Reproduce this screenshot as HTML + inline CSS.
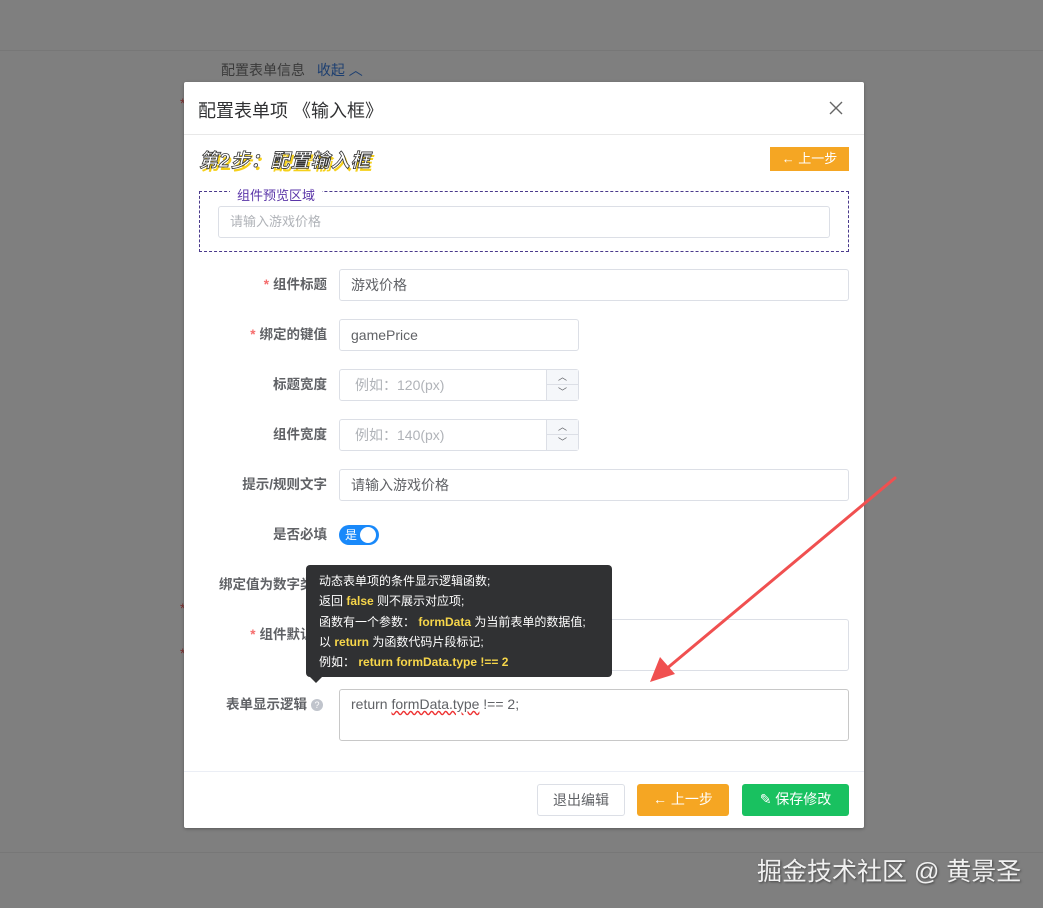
<!DOCTYPE html>
<html><head><meta charset="utf-8"><style>
*{box-sizing:border-box;margin:0;padding:0}
body{width:1043px;height:908px;position:relative;overflow:hidden;background:#7f7f7f;font-family:"Liberation Sans","Noto Sans CJK SC",sans-serif;font-size:14px;color:#606266}
.a{position:absolute}
.inp{position:absolute;border:1px solid #dcdfe6;border-radius:3px;background:#fff;height:32px;line-height:30px;padding-left:11px;color:#606266;font-size:14px}
.ph{color:#b0b3b8}
.lbl{position:absolute;right:716px;width:160px;text-align:right;font-weight:bold;color:#606266;font-size:13.5px;line-height:32px}
.star{color:#f56c6c;margin-right:4px}
.spin{position:absolute;right:0;top:0;width:32px;height:30px;border-left:1px solid #dcdfe6;background:#f5f7fa;font-size:9px;color:#606266;text-align:center}
.spin div{height:15px;line-height:15px}
.spin div:first-child{border-bottom:1px solid #dcdfe6}
.ta{position:absolute;border:1px solid #dcdfe6;border-radius:3px;background:#fff}
.btn{position:absolute;height:32px;line-height:30px;text-align:center;border-radius:3px;font-size:14px;color:#fff}
.tip b{color:#f7d64a}
</style></head><body>
<div class="a" style="left:0;top:50px;width:1043px;height:1px;background:#777"></div>
<div class="a" style="left:0;top:852px;width:1043px;height:1px;background:#777"></div>
<div class="a" style="left:221px;top:60px;font-size:14px;color:#3a3a3a">配置表单信息 <span style="color:#1d3f70;margin-left:8px">收起 ︿</span></div>
<div class="a" style="left:180px;top:95px;color:#7a3030">*</div>
<div class="a" style="left:180px;top:600px;color:#7a3030">*</div>
<div class="a" style="left:180px;top:645px;color:#7a3030">*</div>

<div class="a" style="left:184px;top:82px;width:680px;height:746px;background:#fff;border-radius:2px;box-shadow:0 1px 3px rgba(0,0,0,.3)">
<div class="a" style="left:14px;top:15px;font-size:18px;color:#303133">配置表单项 《输入框》</div>
<svg class="a" style="left:645px;top:19px" width="14" height="14"><path d="M1 1L13 13M13 1L1 13" stroke="#666" stroke-width="1.4"/></svg>
<div class="a" style="left:0;top:52px;width:680px;height:1px;background:#e8e8e8"></div>
<div class="a" style="left:15px;top:64px;font-size:19px;font-weight:bold;font-style:italic;color:#fff;-webkit-text-stroke:0.8px #333;text-shadow:2px 3px 0 #f5d01a;letter-spacing:1px">第2步：配置输入框</div>
<div class="btn" style="left:586px;top:65px;width:79px;height:24px;line-height:24px;background:#f5a623;font-size:13px;border-radius:0">← 上一步</div>
<div class="a" style="left:15px;top:109px;width:650px;height:61px;border:1px dashed #4a3a8c"></div>
<div class="a" style="left:46px;top:103px;background:#fff;padding:0 7px;color:#5a35a8;font-size:13px">组件预览区域</div>
<div class="inp ph" style="left:34px;top:124px;width:612px;height:32px;font-size:13px">请输入游戏价格</div>
</div>

<div class="lbl" style="top:269px"><span class="star">*</span>组件标题</div>
<div class="inp" style="left:339px;top:269px;width:510px">游戏价格</div>
<div class="lbl" style="top:319px"><span class="star">*</span>绑定的键值</div>
<div class="inp" style="left:339px;top:319px;width:240px">gamePrice</div>
<div class="lbl" style="top:369px">标题宽度</div>
<div class="inp ph" style="left:339px;top:369px;width:240px;padding-left:15px">例如：120(px)<div class="spin"><div>︿</div><div>﹀</div></div></div>
<div class="lbl" style="top:419px">组件宽度</div>
<div class="inp ph" style="left:339px;top:419px;width:240px;padding-left:15px">例如：140(px)<div class="spin"><div>︿</div><div>﹀</div></div></div>
<div class="lbl" style="top:469px">提示/规则文字</div>
<div class="inp" style="left:339px;top:469px;width:510px">请输入游戏价格</div>
<div class="lbl" style="top:519px">是否必填</div>
<div class="a" style="left:339px;top:525px;width:40px;height:20px;border-radius:10px;background:#1989fa"><span class="a" style="left:6px;top:2px;color:#fff;font-size:12px;line-height:16px">是</span><span class="a" style="left:21px;top:2px;width:16px;height:16px;border-radius:50%;background:#fff"></span></div>
<div class="lbl" style="top:569px;width:200px">绑定值为数字类型</div>
<div class="lbl" style="top:619px"><span class="star">*</span>组件默认值</div>
<div class="ta" style="left:339px;top:619px;width:510px;height:52px"></div>
<div class="lbl" style="top:689px;right:736px">表单显示逻辑</div>
<div class="a" style="left:311px;top:699px;width:12px;height:12px;border-radius:50%;background:#c0c4cc;color:#fff;font-size:9px;text-align:center;line-height:12px">?</div>
<div class="ta" style="left:339px;top:689px;width:510px;height:52px;border-color:#c8c8c8;padding:6px 0 0 11px;font-size:14px;color:#606266">return <span style="text-decoration:underline wavy #e33">formData.type</span> !== 2;</div>

<div class="a tip" style="left:306px;top:565px;width:306px;height:112px;background:#303133;border-radius:4px;color:#fff;font-size:12px;line-height:20.3px;padding:6px 0 0 13px">
动态表单项的条件显示逻辑函数;<br>返回 <b>false</b> 则不展示对应项;<br>函数有一个参数： <b>formData</b> 为当前表单的数据值;<br>以 <b>return</b> 为函数代码片段标记;<br>例如： <b>return formData.type !== 2</b>
</div>
<div class="a" style="left:310px;top:677px;width:0;height:0;border-left:6px solid transparent;border-right:6px solid transparent;border-top:6px solid #303133"></div>

<div class="a" style="left:184px;top:771px;width:680px;height:1px;background:#ebeef5"></div>
<div class="btn" style="left:537px;top:784px;width:88px;border:1px solid #dcdfe6;color:#606266;background:#fff">退出编辑</div>
<div class="btn" style="left:637px;top:784px;width:92px;background:#f5a623">← 上一步</div>
<div class="btn" style="left:742px;top:784px;width:107px;background:#19c160">✎ 保存修改</div>

<svg class="a" style="left:0;top:0" width="1043" height="908"><line x1="895" y1="478" x2="665" y2="670" stroke="#f05050" stroke-width="3" stroke-linecap="round"/><polygon points="650,682 660,657 675,674" fill="#f05050"/></svg>
<div class="a" style="left:757px;top:852px;font-size:25px;color:#f0f0f0;text-shadow:1px 1px 2px #444">掘金技术社区 @ 黄景圣</div>
</body></html>
